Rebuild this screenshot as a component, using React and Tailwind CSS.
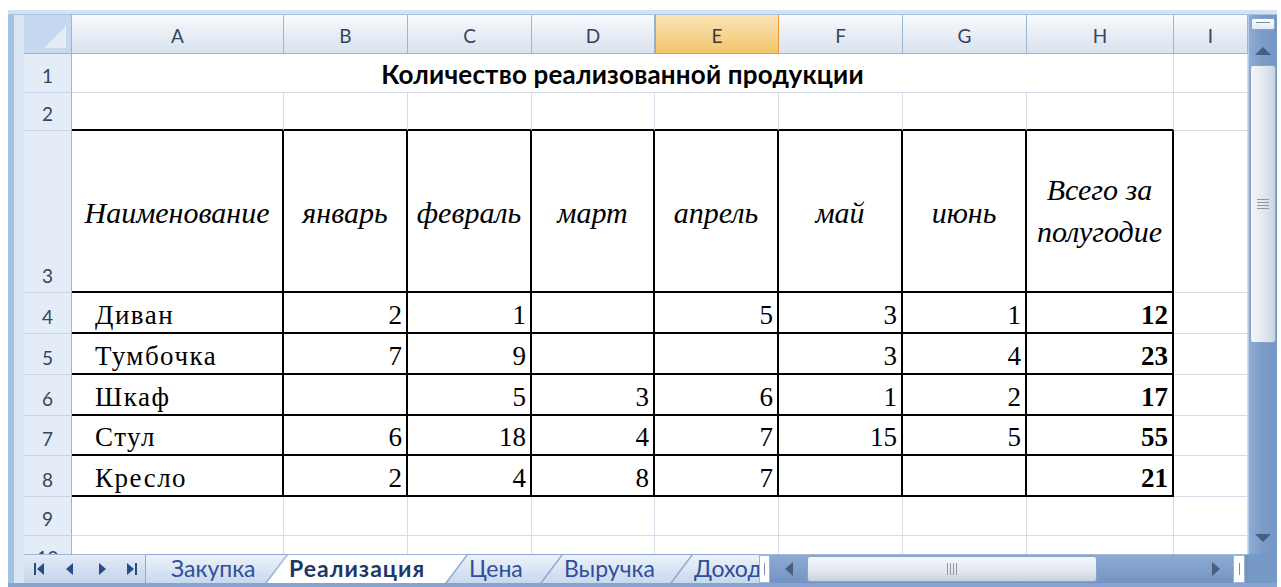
import clsx from "clsx";

const COLS = ["A", "B", "C", "D", "E", "F", "G", "H", "I"];
const MONTHS = ["январь", "февраль", "март", "апрель", "май", "июнь"];
const ITEMS = [
  { name: "Диван", v: [2, 1, null, 5, 3, 1], total: 12 },
  { name: "Тумбочка", v: [7, 9, null, null, 3, 4], total: 23 },
  { name: "Шкаф", v: [null, 5, 3, 6, 1, 2], total: 17 },
  { name: "Стул", v: [6, 18, 4, 7, 15, 5], total: 55 },
  { name: "Кресло", v: [2, 4, 8, 7, null, null], total: 21 },
];

const SANS = "[font-family:Lato,'Open_Sans',sans-serif]";
const SERIF = "[font-family:'Liberation_Serif','Times_New_Roman',serif]";

const grid = "border-r border-b border-[#d5dce8]";
const boxed = "border-r-2 border-b-2 border-black";

function RowHead({ n }) {
  return (
    <div
      className={clsx(
        "flex items-end justify-center pb-[7px] bg-[#e4ecf7] border-r border-r-[#9eb6ce] border-b border-b-[#c5d4e8] text-[19px] leading-none text-[#34465f]",
        SANS
      )}
    >
      {n}
    </div>
  );
}

function ColHead({ label }) {
  const active = label === "E";
  return (
    <div
      className={clsx(
        "flex items-center justify-center pt-[3px] border-r border-b text-[19px] leading-none",
        SANS,
        active
          ? "bg-linear-to-b from-[#fbe4b6] to-[#f2c56c] border-[#f29536] border-l text-[#3a3a3a]"
          : "bg-linear-to-b from-[#f8fafd] to-[#d9e2ef] border-[#9eb6ce] text-[#34465f]"
      )}
    >
      {label}
    </div>
  );
}

function Sheet() {
  return (
    <div className="w-[1224px] h-[539px] overflow-hidden shrink-0 bg-white">
      <div className="grid grid-cols-[48px_212px_124px_124px_123px_124px_124px_124px_147px_74px] grid-rows-[39px_39px_38px_162px_41px_41px_41px_40px_41px_39px_39px]">
        {/* select-all corner */}
        <div className="relative bg-[#c6d8ef] border-r border-b border-[#9eb6ce]">
          <svg className="absolute right-[5px] bottom-[5px]" width="22" height="22">
            <path d="M22 0V22H0Z" fill="#e6ecf4" />
          </svg>
        </div>
        {COLS.map((c) => (
          <ColHead key={c} label={c} />
        ))}

        {/* 1: merged title */}
        <RowHead n={1} />
        <div
          className={clsx(
            "col-span-8 flex items-center justify-center pt-[2px] text-[26px] font-bold leading-none tracking-[0.2px] text-black",
            SANS,
            grid
          )}
        >
          Количество реализованной продукции
        </div>
        <div className={grid} />

        {/* 2 */}
        <RowHead n={2} />
        {COLS.slice(0, 8).map((c) => (
          <div key={c} className="border-r border-[#d5dce8] border-b-2 border-b-black" />
        ))}
        <div className={grid} />

        {/* 3: table header */}
        <RowHead n={3} />
        <div className={clsx("flex items-center justify-center pt-[2px] italic text-[30px]", SERIF, boxed)}>
          Наименование
        </div>
        {MONTHS.map((m) => (
          <div key={m} className={clsx("flex items-center justify-center pt-[2px] italic text-[30px]", SERIF, boxed)}>
            {m}
          </div>
        ))}
        <div
          className={clsx(
            "flex items-center justify-center text-center italic text-[30px] leading-[42px]",
            SERIF,
            boxed
          )}
        >
          Всего за
          <br />
          полугодие
        </div>
        <div className={grid} />

        {/* 4-8: data */}
        {ITEMS.map((it, i) => (
          <Row key={it.name} n={i + 4} item={it} />
        ))}

        {/* 9, 10 */}
        {[9, 10].map((n) => (
          <Blank key={n} n={n} />
        ))}
      </div>
    </div>
  );
}

function Row({ n, item }) {
  return (
    <>
      <RowHead n={n} />
      <div
        className={clsx(
          "flex items-end pl-[23px] pb-[3px] text-[27px] leading-none tracking-[1.5px]",
          SERIF,
          boxed
        )}
      >
        {item.name}
      </div>
      {item.v.map((v, j) => (
        <div
          key={j}
          className={clsx("flex items-end justify-end pr-[4px] pb-[3px] text-[27px] leading-none", SERIF, boxed)}
        >
          {v}
        </div>
      ))}
      <div
        className={clsx(
          "flex items-end justify-end pr-[4px] pb-[3px] text-[27px] font-bold leading-none",
          SERIF,
          boxed
        )}
      >
        {item.total}
      </div>
      <div className={grid} />
    </>
  );
}

function Blank({ n }) {
  return (
    <>
      <RowHead n={n} />
      {COLS.map((c) => (
        <div key={c} className={grid} />
      ))}
    </>
  );
}

function VScroll() {
  return (
    <div className="w-[29px] h-[539px] shrink-0 flex flex-col items-center bg-linear-to-r from-[#8eabd3] via-[#7a9bc9] to-[#7597c6] border-l border-[#b8cbe6]">
      <div className="mt-[3px] w-[24px] h-[12px] bg-linear-to-b from-white to-[#e3eaf4] border border-[#8aa5cc] rounded-[2px] flex items-start justify-center pt-[3px]">
        <div className="w-[14px] h-[1px] bg-[#7d8ea8]" />
      </div>
      <svg className="mt-[17px]" width="16" height="8">
        <path d="M8 0L16 8H0Z" fill="#4a5d7e" />
      </svg>
      <div className="mt-[10px] w-[26px] h-[278px] rounded-[3px] border border-[#8aa3c6] bg-linear-to-r from-[#f3f6fa] via-[#e4e9f0] to-[#c9d3e1] flex flex-col items-center justify-center gap-[2px]">
        {[0, 1, 2, 3].map((k) => (
          <div key={k} className="w-[12px] h-[1px] bg-[#8d97a6]" />
        ))}
      </div>
      <div className="flex-1" />
      <svg className="mb-[12px]" width="16" height="8">
        <path d="M0 0H16L8 8Z" fill="#4a5d7e" />
      </svg>
    </div>
  );
}

const TABS = [
  { label: "Закупка", w: "w-[142px]", first: true },
  { label: "Реализация", w: "w-[202px]", active: true },
  { label: "Цена", w: "w-[117px]" },
  { label: "Выручка", w: "w-[152px]" },
  { label: "Доход", w: "w-[110px]" },
];

function Tab({ tab }) {
  const shape = tab.first
    ? "[clip-path:polygon(0_0,100%_0,100%_100%,0_100%)]"
    : "[clip-path:polygon(0_100%,22px_0,100%_0,100%_100%)]";
  const inner = tab.first
    ? "[clip-path:polygon(1px_1px,100%_1px,100%_100%,1px_100%)]"
    : "[clip-path:polygon(2px_100%,23px_1px,100%_1px,100%_100%)]";
  return (
    <div className={clsx("relative h-full shrink-0", tab.w, !tab.first && "-ml-[22px]")}>
      <div className={clsx("absolute inset-0", shape, tab.active ? "bg-[#9db4d6]" : "bg-[#8ea9cf]")} />
      <div
        className={clsx(
          "absolute inset-0",
          inner,
          tab.active ? "bg-white" : "bg-linear-to-b from-[#eef3fa] to-[#c8d8ee]"
        )}
      />
      <div
        className={clsx(
          "relative h-full flex items-center text-[23px] leading-none whitespace-nowrap",
          SANS,
          tab.first ? "pl-[26px]" : "pl-[24px]",
          tab.active ? "font-bold tracking-[1px] text-[#1d3766]" : "text-[#2f4f98]"
        )}
      >
        {tab.label}
      </div>
    </div>
  );
}

function NavIcon({ kind }) {
  const c = "#2b4b86";
  return (
    <svg width="11" height="12" viewBox="0 0 11 12">
      {kind === "first" && (
        <>
          <rect x="0" y="0" width="2" height="12" fill={c} />
          <path d="M10 0V12L3 6Z" fill={c} />
        </>
      )}
      {kind === "prev" && <path d="M8 0V12L1 6Z" fill={c} />}
      {kind === "next" && <path d="M3 0V12L10 6Z" fill={c} />}
      {kind === "last" && (
        <>
          <path d="M0 0V12L7 6Z" fill={c} />
          <rect x="8" y="0" width="2" height="12" fill={c} />
        </>
      )}
    </svg>
  );
}

function TabBar() {
  return (
    <div className="h-[29px] flex shrink-0">
      <div className="w-[1224px] flex bg-linear-to-b from-[#e3ebf6] to-[#c4d4eb] border-t border-[#9fb7d9]">
        {/* sheet navigation */}
        <div className="w-[121px] shrink-0 flex items-center pl-[10px] gap-[20px]">
          <NavIcon kind="first" />
          <NavIcon kind="prev" />
          <NavIcon kind="next" />
          <NavIcon kind="last" />
        </div>
        <div className="w-[614px] shrink-0 flex overflow-hidden -mt-px">
          {TABS.map((t) => (
            <Tab key={t.label} tab={t} />
          ))}
        </div>
        {/* tab split box */}
        <div className="w-[11px] shrink-0 flex items-center justify-center bg-white border border-[#9db4d6]">
          <div className="w-[1px] h-[12px] bg-[#7d8ea8]" />
        </div>
        {/* horizontal scrollbar */}
        <div className="w-[463px] shrink-0 flex items-center bg-linear-to-b from-[#8eabd3] to-[#7393c3]">
          <div className="w-[37px] flex justify-center">
            <svg width="8" height="14">
              <path d="M8 0V14L0 7Z" fill="#4a5d7e" />
            </svg>
          </div>
          <div className="w-[290px] h-[26px] rounded-[3px] border border-[#8aa3c6] bg-linear-to-b from-[#f5f7fa] via-[#e6eaf0] to-[#c9d2df] flex items-center justify-center gap-[2px]">
            {[0, 1, 2, 3].map((k) => (
              <div key={k} className="w-[1px] h-[12px] bg-[#8d97a6]" />
            ))}
          </div>
          <div className="flex-1 flex justify-end pr-[13px]">
            <svg width="8" height="14">
              <path d="M0 0V14L8 7Z" fill="#4a5d7e" />
            </svg>
          </div>
        </div>
        <div className="w-[12px] shrink-0 flex items-center justify-center bg-white border border-[#9db4d6]">
          <div className="w-[1px] h-[12px] bg-[#7d8ea8]" />
        </div>
        <div className="w-[3px] shrink-0 bg-[#7393c3]" />
      </div>
      <div className="w-[29px] shrink-0 bg-[#7799c8]" />
    </div>
  );
}

export default function App() {
  return (
    <div className="w-[1281px] h-[587px] bg-white overflow-hidden flex flex-col">
      <div className="h-[10px] shrink-0" />
      <div className="flex-1 min-h-0 flex flex-col ml-[8px] mr-[4px]">
        <div className="h-[5px] shrink-0 bg-[#d4e1f2] border-b border-[#a9c0df]" />
        <div className="flex-1 min-h-0 flex">
          <div className="w-[16px] shrink-0 flex">
            <div className="w-[6px] bg-[#a5c0e5]" />
            <div className="flex-1 bg-[#dbe6f4]" />
          </div>
          <div className="flex flex-col">
            <div className="flex">
              <Sheet />
              <VScroll />
            </div>
            <TabBar />
          </div>
        </div>
        <div className="h-[4px] shrink-0 bg-[#86a4cf]" />
      </div>
    </div>
  );
}
